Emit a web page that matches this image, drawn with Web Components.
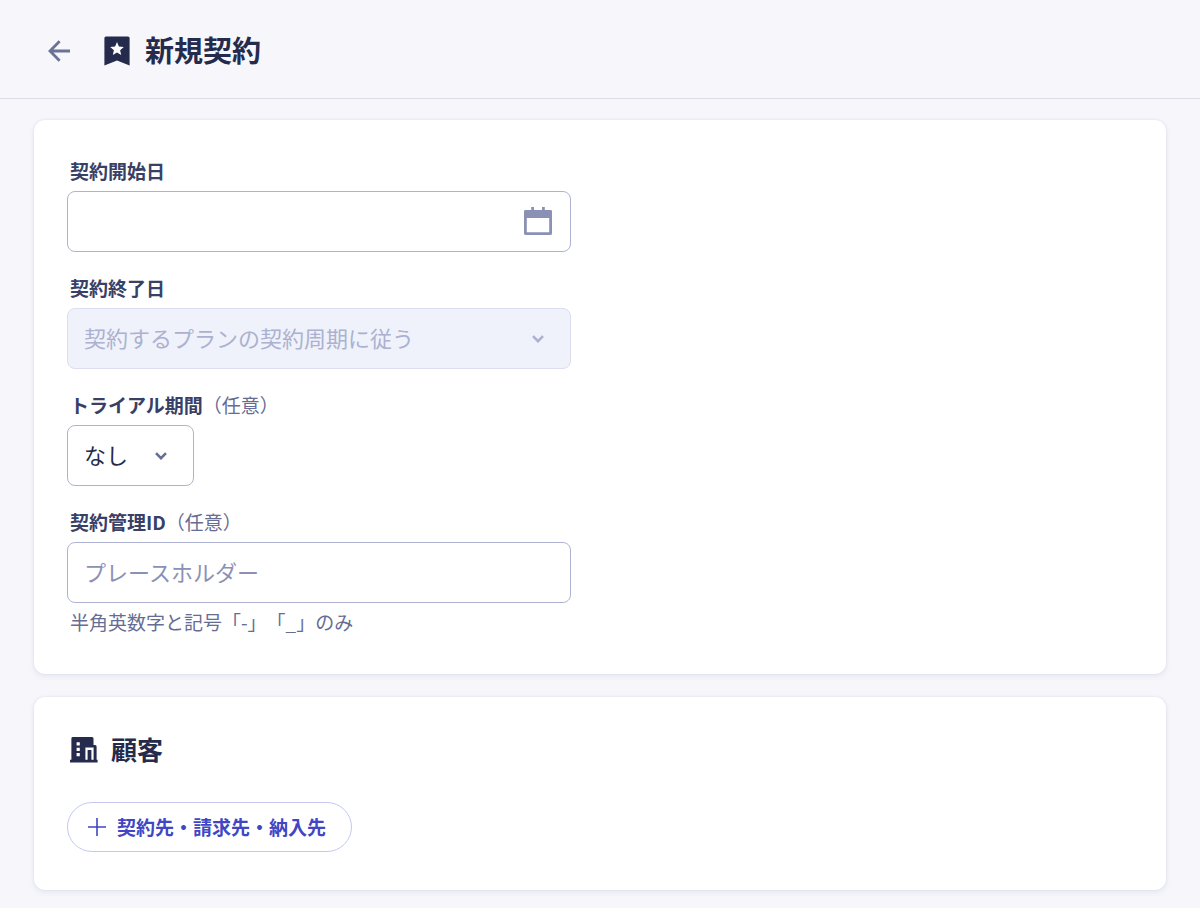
<!DOCTYPE html>
<html lang="ja">
<head>
<meta charset="utf-8">
<meta name="viewport" content="width=device-width, initial-scale=1">
<title>新規契約</title>
<style>
    :root {
        --text: #252b4d;
        --label: #394066;
        --sub: #666d94;
        --hint: #8b91b5;
        --muted: #acb1d0;
        --border: #afb3d3;
        --accent: #4046c4;
    }
    body {
        margin: 0;
        min-height: 100vh;
        background: #f6f6fb;
        color: var(--text);
        font-family: "Noto Sans CJK JP", "Noto Sans", sans-serif;
        font-size: 19px;
        line-height: 28px;
        text-spacing-trim: space-all;
    }
    main {
        display: flex;
        flex-direction: column;
        gap: 23px;
        padding: 21px 34px 17px;
    }
</style>
</head>
<body>
    <page-header>新規契約</page-header>
    <main>
        <form-card>
            <text-field label="契約開始日" icon="calendar"></text-field>
            <select-field label="契約終了日" options="契約するプランの契約周期に従う" disabled></select-field>
            <select-field label="トライアル期間" options="なし" optional compact></select-field>
            <text-field label="契約管理ID" placeholder="プレースホルダー" help="半角英数字と記号「-」「_」のみ" optional></text-field>
        </form-card>
        <form-card>
            <section-title>顧客</section-title>
            <add-button>契約先・請求先・納入先</add-button>
        </form-card>
    </main>

<script>
const fieldStyle = `
    :host {
        display: block;
        margin-bottom: 22px;
    }
    :host(:last-child) {
        margin-bottom: 0;
    }
    label {
        display: block;
        width: fit-content;
        margin-bottom: 6px;
        padding-left: 3px;
        color: var(--label);
        font-weight: 700;
    }
    label span {
        color: var(--sub);
        font-weight: 400;
    }
    .box {
        display: grid;
        align-items: center;
        max-width: 504px;
    }
    .box > * {
        grid-area: 1 / 1;
    }
    input, select {
        box-sizing: border-box;
        width: 100%;
        height: 61px;
        margin: 0;
        padding: 0 16px 3px;
        border: 1px solid var(--border);
        border-radius: 8px;
        outline-color: var(--accent);
        background: #fff;
        color: var(--text);
        font: inherit;
        font-size: 22px;
    }
    svg {
        justify-self: end;
        pointer-events: none;
    }
`;

class PageHeader extends HTMLElement {

    constructor() {
        super();

        const shadowRoot = this.attachShadow({ mode: 'open' });
        shadowRoot.innerHTML = `
        <style>
            :host {
                display: block;
                border-bottom: 1px solid #dadcea;
            }
            header {
                display: flex;
                align-items: center;
                padding: 32px 48px 28px;
            }
            button {
                display: flex;
                margin: 0 34px 0 0;
                padding: 0;
                border: 0;
                background: none;
                cursor: pointer;
            }
            h1 {
                margin: 0 0 0 15px;
                padding-bottom: 4px;
                font-size: 29px;
                line-height: 34px;
                font-weight: 700;
            }
        </style>
        <header>
            <button type="button" aria-label="戻る">
                <svg width="22" height="22" viewBox="0 0 22 22" fill="none" stroke="#6b7298" stroke-width="2.8">
                    <path d="M22 11H2.5M11.6 1.2L2 11l9.6 9.8"/>
                </svg>
            </button>
            <svg width="26" height="30" viewBox="0 0 26 30" fill="#252b4d" aria-hidden="true">
                <path d="M2 0.5h22a1.6 1.6 0 0 1 1.6 1.6V29.6L13 24.4 0.4 29.6V2.1A1.6 1.6 0 0 1 2 0.5z"/>
                <path fill="#fff" d="M13 6.1l1.9 4.5 4.9.4-3.7 3.2 1.1 4.8-4.2-2.5L8.8 19l1.1-4.8L6.2 11l4.9-.4z"/>
            </svg>
            <h1><slot></slot></h1>
        </header>
        `;
    }

}

class FormCard extends HTMLElement {

    constructor() {
        super();

        const shadowRoot = this.attachShadow({ mode: 'open' });
        shadowRoot.innerHTML = `
        <style>
            :host {
                display: block;
                padding: 37px 33px 38px;
                border-radius: 11px;
                background: #fff;
                box-shadow: 0 0 2px rgba(60,70,130,0.12), 0 2px 6px rgba(60,70,130,0.09);
            }
        </style>
        <slot></slot>
        `;
    }

}

class TextField extends HTMLElement {

    constructor() {
        super();

        const label = this.getAttribute('label');
        const help = this.getAttribute('help');
        const shadowRoot = this.attachShadow({ mode: 'open' });
        shadowRoot.innerHTML = `
        <style>
            ${fieldStyle}
            input::placeholder {
                color: var(--hint);
                opacity: 1;
            }
            svg {
                margin-right: 19px;
                margin-bottom: 2px;
            }
            p {
                margin: 5px 0 0;
                padding-left: 3px;
                color: var(--sub);
            }
        </style>
        <label for="input">${label}${this.hasAttribute('optional') ? '<span>（任意）</span>' : ''}</label>
        <div class="box">
            <input id="input" type="text" autocomplete="off">
            ${this.getAttribute('icon') === 'calendar' ? `
            <svg width="28" height="28" viewBox="0 0 28 28" fill="#8b91b5" aria-hidden="true">
                <path fill-rule="evenodd" d="M7.2 0h2.8v3h8V0h2.8v3h5.8A1.4 1.4 0 0 1 28 4.4V26.6A1.4 1.4 0 0 1 26.6 28H1.4A1.4 1.4 0 0 1 0 26.6V4.4A1.4 1.4 0 0 1 1.4 3H7.2zM2.8 11V25.2H25.2V11z"/>
            </svg>` : ''}
        </div>
        ${help ? `<p id="help">${help}</p>` : ''}
        `;
        this.dinput = shadowRoot.querySelector('#input');
        this.dinput.placeholder = this.getAttribute('placeholder') || '';
        if(help) {
            this.dinput.setAttribute('aria-describedby', 'help');
        }
    }

    get value() {
        return this.dinput.value;
    }

    set value(value) {
        this.dinput.value = value;
    }

}

class SelectField extends HTMLElement {

    constructor() {
        super();

        const label = this.getAttribute('label');
        const options = this.getAttribute('options').split(',');
        const shadowRoot = this.attachShadow({ mode: 'open' });
        shadowRoot.innerHTML = `
        <style>
            ${fieldStyle}
            select {
                appearance: none;
                padding-right: 52px;
            }
            select:disabled {
                border-color: #dcdeee;
                background: #eff2fa;
                color: var(--muted);
                opacity: 1;
            }
            svg {
                margin-right: 27px;
                color: var(--sub);
            }
            :host([disabled]) svg {
                color: var(--muted);
            }
            :host([compact]) .box {
                max-width: 127px;
            }
        </style>
        <label for="select">${label}${this.hasAttribute('optional') ? '<span>（任意）</span>' : ''}</label>
        <div class="box">
            <select id="select">${options.map((o) => `<option>${o}</option>`).join('')}</select>
            <svg width="12" height="8" viewBox="0 0 12 8" fill="none" stroke="currentColor" stroke-width="2.6" aria-hidden="true">
                <path d="M1 1.2L6 6.2l5-5"/>
            </svg>
        </div>
        `;
        this.dselect = shadowRoot.querySelector('#select');
        this.dselect.disabled = this.hasAttribute('disabled');
    }

    get value() {
        return this.dselect.value;
    }

}

class SectionTitle extends HTMLElement {

    constructor() {
        super();

        const shadowRoot = this.attachShadow({ mode: 'open' });
        shadowRoot.innerHTML = `
        <style>
            :host {
                display: block;
                margin-bottom: 38px;
            }
            h2 {
                display: flex;
                align-items: center;
                gap: 13px;
                margin: 0;
                padding-left: 3px;
                font-size: 26px;
                line-height: 30px;
                font-weight: 700;
            }
            svg {
                margin-top: 2px;
            }
        </style>
        <h2>
            <svg width="28" height="26" viewBox="0 0 28 26" aria-hidden="true">
                <path fill="#252b4d" d="M2.5 0H22a1.5 1.5 0 0 1 1.5 1.5V8h1.6A1.5 1.5 0 0 1 26.6 9.5V22.8H27.6V25.5H0V22.8H1.4V1.3A1.3 1.3 0 0 1 2.5 0z"/>
                <path fill="#fff" d="M6.6 5.3h3.2v3.2H6.6zM6.6 10.7h3.2v3.2H6.6zM6.6 16.1h3.2v3.2H6.6zM15.4 10.6H23.6V22.8H21.4V12.9H17.6V22.8H15.4z"/>
            </svg>
            <slot></slot>
        </h2>
        `;
    }

}

class AddButton extends HTMLElement {

    constructor() {
        super();

        const shadowRoot = this.attachShadow({ mode: 'open' });
        shadowRoot.innerHTML = `
        <style>
            :host {
                display: flex;
            }
            button {
                display: flex;
                align-items: center;
                gap: 11px;
                height: 50px;
                margin: 0;
                padding: 0 25px 0 20px;
                border: 1px solid #c3c8f2;
                border-radius: 25px;
                background: #fff;
                color: var(--accent);
                font: inherit;
                font-weight: 700;
                cursor: pointer;
            }
            button:hover {
                background: #f5f6ff;
            }
        </style>
        <button type="button">
            <svg width="18" height="18" viewBox="0 0 18 18" stroke="currentColor" stroke-width="1.6" aria-hidden="true">
                <path d="M9 0v18M0 9h18"/>
            </svg>
            <slot></slot>
        </button>
        `;
    }

}

customElements.define('page-header', PageHeader);
customElements.define('form-card', FormCard);
customElements.define('text-field', TextField);
customElements.define('select-field', SelectField);
customElements.define('section-title', SectionTitle);
customElements.define('add-button', AddButton);
</script>
</body>
</html>
